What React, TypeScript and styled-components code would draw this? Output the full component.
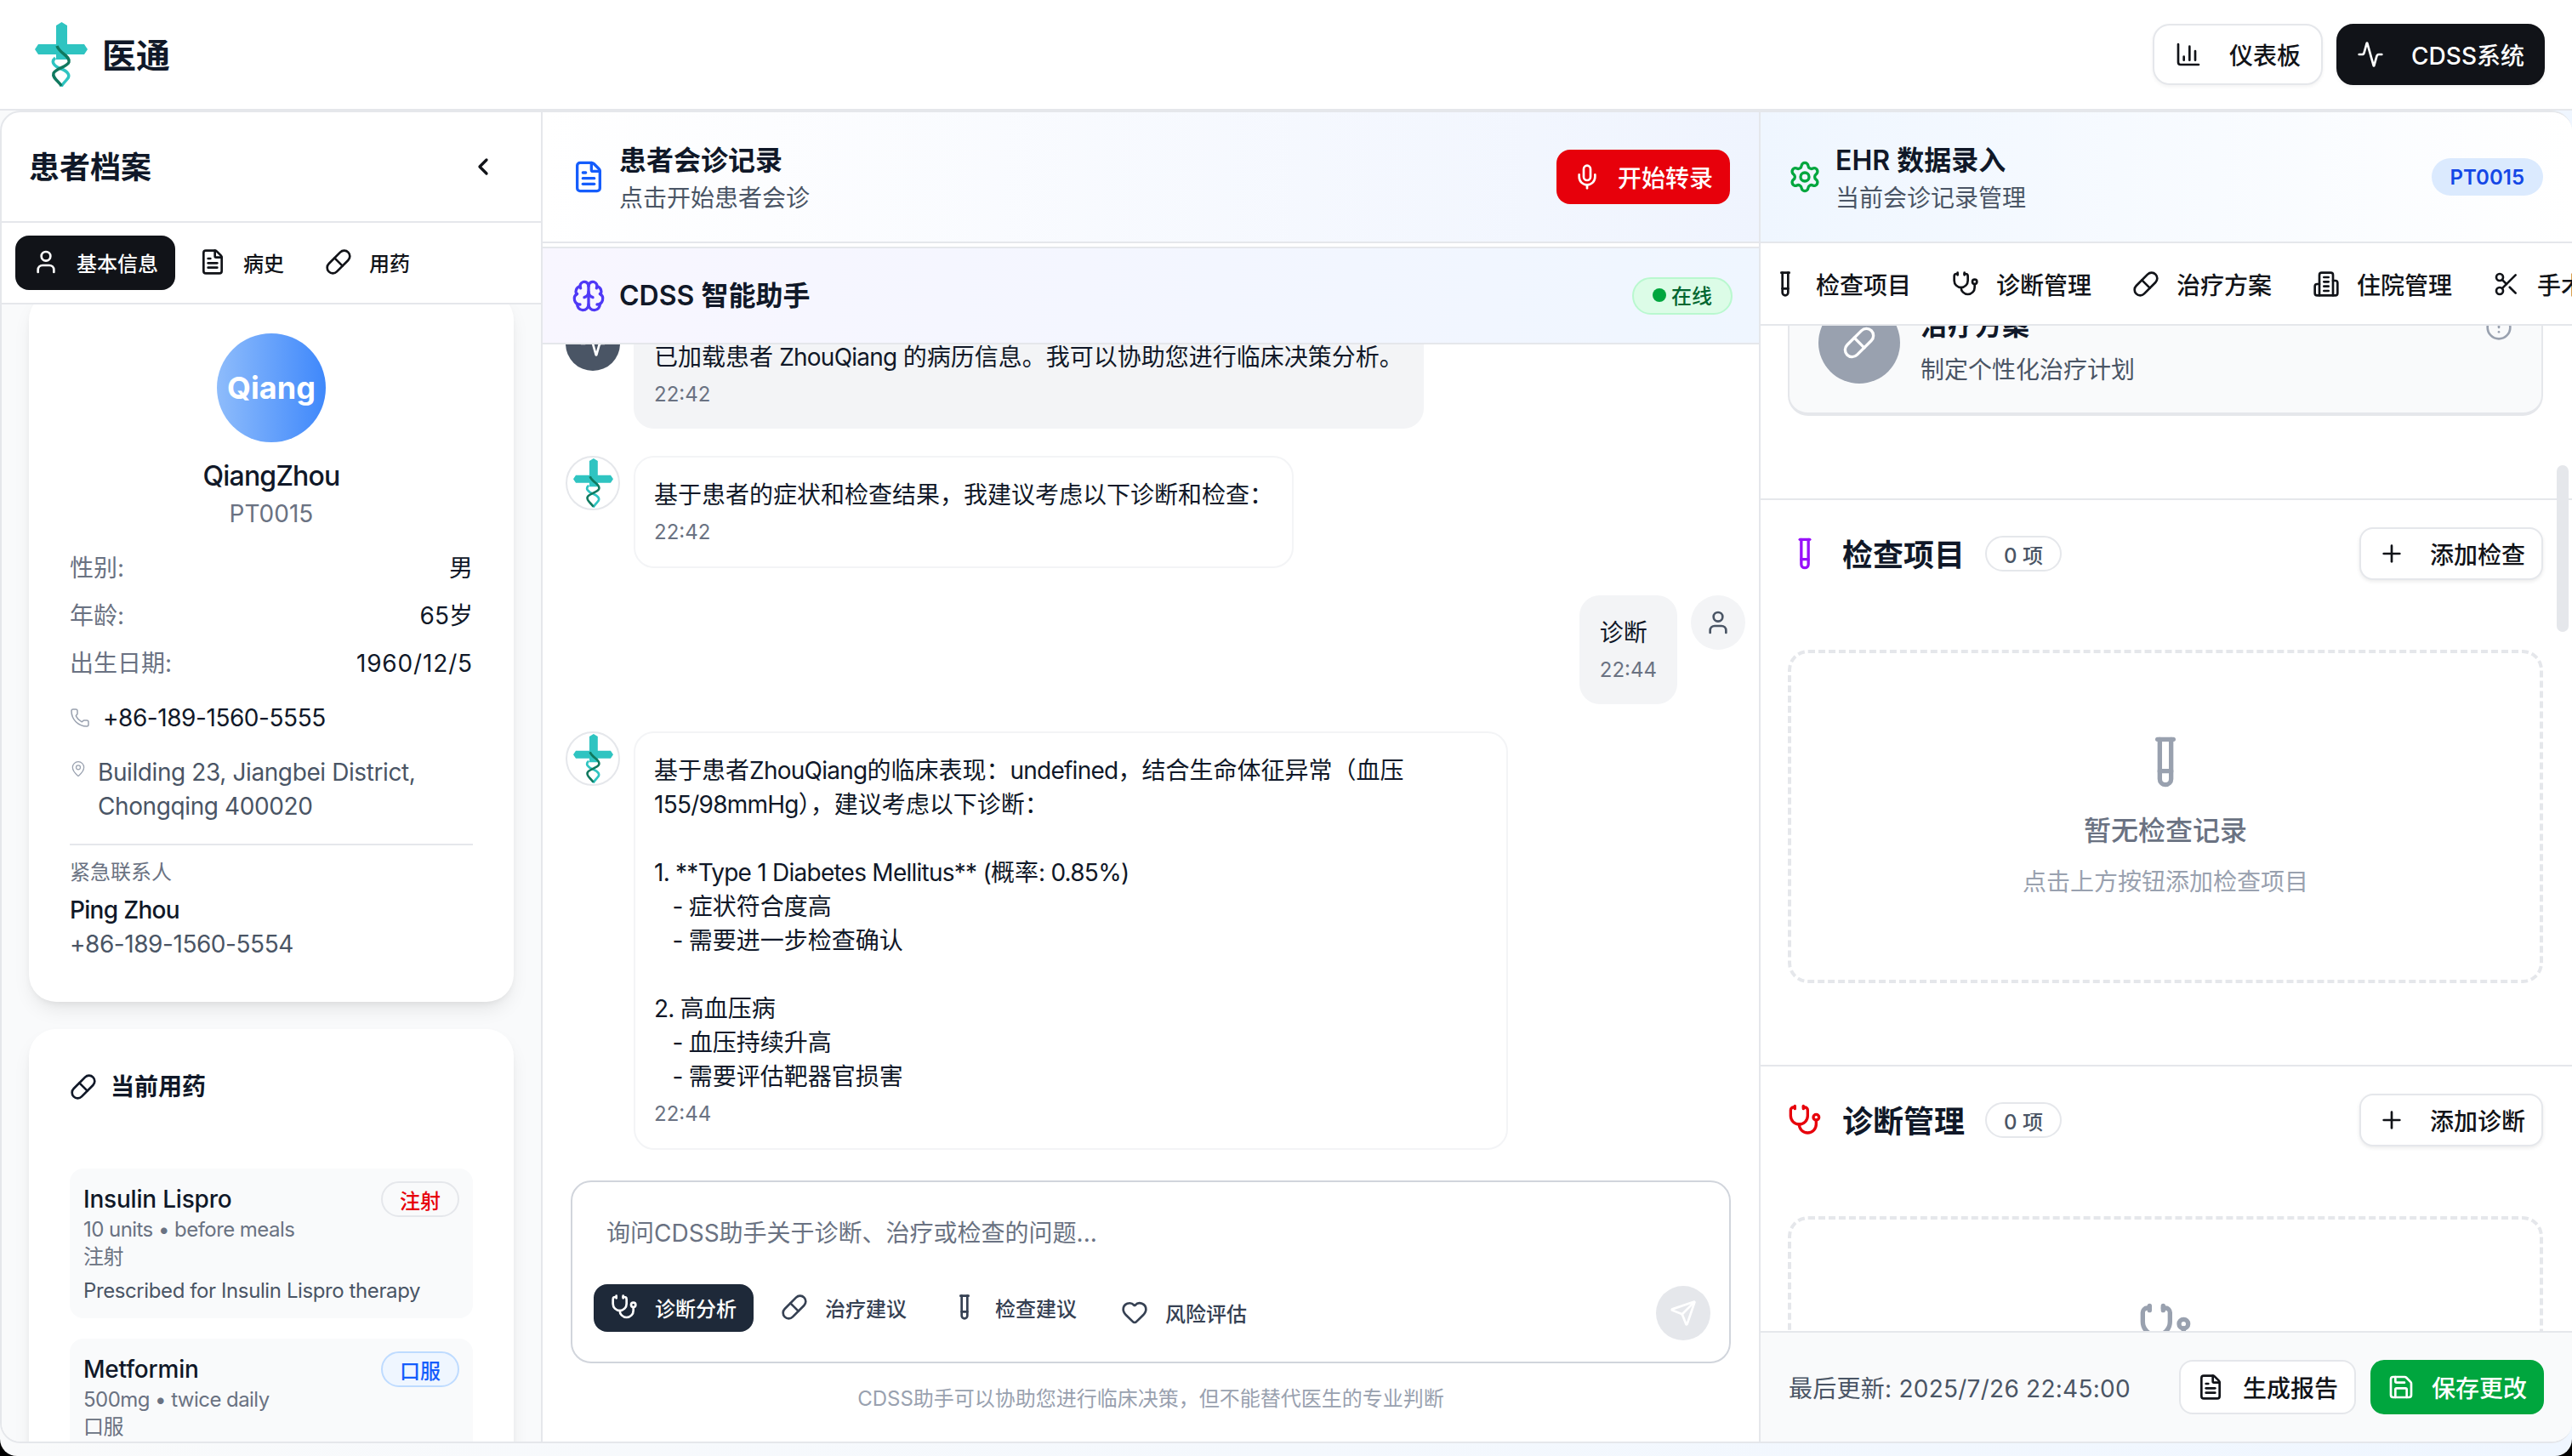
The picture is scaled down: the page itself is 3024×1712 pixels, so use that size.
import React from 'react';
import styled, { createGlobalStyle } from 'styled-components';
import {
  Activity,
  Brain,
  ChartColumn,
  ChevronLeft,
  CircleAlert,
  FileText,
  Heart,
  MapPin,
  Mic,
  Phone,
  Pill,
  Plus,
  Save,
  Scissors,
  Send,
  Settings,
  Stethoscope,
  TestTube,
  User,
} from 'lucide-react';

const GlobalStyle = createGlobalStyle`
  * {
    box-sizing: border-box;
  }
  html, body {
    margin: 0;
    width: 3024px;
    height: 1712px;
    overflow: hidden;
    background: #000;
    font-family: Inter, "Noto Sans CJK SC", sans-serif;
    color: #101828;
  }
`;

function Logo({ width }: { width: number }) {
  return (
    <svg width={width} height={(width * 76) / 62} viewBox='0 0 62 76' fill='none'>
      <path
        d='M25 4 L31.500 0 L38 4 V26 H58 L62 32 L58 38 H38 V44 H25 V38 H4 L0 32 L4 26 H25 Z'
        fill='#2fc4c1'
      />
      <path
        d='M24 42 C18 47 23 52 31 55 C39 58 42 63 38 67 C35 71 32 73 31 76'
        stroke='#2fc4c1'
        strokeWidth='3.500'
      />
      <path
        d='M26 28 C29 37 42 40 40 47 C38 53 25 54 22 60 C20 66 29 70 31 75'
        stroke='#10795f'
        strokeWidth='3.500'
      />
    </svg>
  );
}

// lucide 的新版 Building2 带门，这里要旧版
function WardIcon({ size }: { size: number }) {
  return (
    <svg
      width={size}
      height={size}
      viewBox='0 0 24 24'
      fill='none'
      stroke='currentColor'
      strokeWidth='2'
      strokeLinecap='round'
      strokeLinejoin='round'
    >
      <path d='M6 22V4a2 2 0 0 1 2-2h8a2 2 0 0 1 2 2v18Z' />
      <path d='M6 12H4a2 2 0 0 0-2 2v6a2 2 0 0 0 2 2h2' />
      <path d='M18 9h2a2 2 0 0 1 2 2v9a2 2 0 0 1-2 2h-2' />
      <path d='M10 6h4' />
      <path d='M10 10h4' />
      <path d='M10 14h4' />
      <path d='M10 18h4' />
    </svg>
  );
}

type Message = {
  from: 'system' | 'bot' | 'user';
  text: string;
  time: string;
};

const messages: Message[] = [
  { from: 'system', text: '已加载患者 ZhouQiang 的病历信息。我可以协助您进行临床决策分析。', time: '22:42' },
  { from: 'bot', text: '基于患者的症状和检查结果，我建议考虑以下诊断和检查：', time: '22:42' },
  { from: 'user', text: '诊断', time: '22:44' },
  {
    from: 'bot',
    text: `基于患者ZhouQiang的临床表现：undefined，结合生命体征异常（血压155/98mmHg），建议考虑以下诊断：

1. **Type 1 Diabetes Mellitus** (概率: 0.85%)
   - 症状符合度高
   - 需要进一步检查确认

2. 高血压病
   - 血压持续升高
   - 需要评估靶器官损害`,
    time: '22:44',
  },
];

const ehrTabs = [
  { label: '检查项目', icon: TestTube },
  { label: '诊断管理', icon: Stethoscope },
  { label: '治疗方案', icon: Pill },
  { label: '住院管理', icon: WardIcon },
  { label: '手术管理', icon: Scissors },
];

// 拉丁字母段落收紧一点，中文保持全角
function withLatinRuns(text: string) {
  return text
    .split(/([\x20-\x7e]+)/)
    .map((part, i) => (i % 2 ? <LatinRun key={i}>{part}</LatinRun> : part));
}

function App() {
  return (
    <Shell>
      <GlobalStyle />
      <TopBar>
        <Brand>
          <Logo width={62} />
          <BrandName>医通</BrandName>
        </Brand>
        <TopActions>
          <TopButton>
            <ChartColumn size={32} strokeWidth={2} />
            仪表板
          </TopButton>
          <TopButton $active>
            <Activity size={32} strokeWidth={2} />
            CDSS系统
          </TopButton>
        </TopActions>
      </TopBar>

      <Main>
        <PatientPanel>
          <PanelTitleBar>
            <PanelTitle>患者档案</PanelTitle>
            <CollapseIcon size={32} strokeWidth={2.5} />
          </PanelTitleBar>
          <PatientTabs>
            <PatientTab $active>
              <User size={32} />
              基本信息
            </PatientTab>
            <PatientTab>
              <FileText size={32} />
              病史
            </PatientTab>
            <PatientTab>
              <Pill size={32} />
              用药
            </PatientTab>
          </PatientTabs>
          <PatientScroll>
            <PatientCard>
              <AvatarLarge>Qiang</AvatarLarge>
              <PatientName>QiangZhou</PatientName>
              <PatientCode>PT0015</PatientCode>
              <InfoRows>
                <InfoRow>
                  <InfoLabel>性别:</InfoLabel>
                  <span>男</span>
                </InfoRow>
                <InfoRow>
                  <InfoLabel>年龄:</InfoLabel>
                  <span>65岁</span>
                </InfoRow>
                <InfoRow>
                  <InfoLabel>出生日期:</InfoLabel>
                  <DateValue>1960/12/5</DateValue>
                </InfoRow>
              </InfoRows>
              <PhoneRow>
                <Phone size={24} color='#99a1af' strokeWidth={1.5} />
                +86-189-1560-5555
              </PhoneRow>
              <AddressRow>
                <MapPin size={20} color='#99a1af' strokeWidth={1.5} />
                <span>Building 23, Jiangbei District, Chongqing 400020</span>
              </AddressRow>
              <Contact>
                <ContactLabel>紧急联系人</ContactLabel>
                <ContactName>Ping Zhou</ContactName>
                <ContactPhone>+86-189-1560-5554</ContactPhone>
              </Contact>
            </PatientCard>

            <MedicationCard>
              <MedicationTitle>
                <Pill size={32} />
                当前用药
              </MedicationTitle>
              <MedicationList>
                <MedicationItem>
                  <MedicationHead>
                    <MedicationName>Insulin Lispro</MedicationName>
                    <RouteBadge $tone='red'>注射</RouteBadge>
                  </MedicationHead>
                  <MedicationLine>10 units • before meals</MedicationLine>
                  <MedicationLine>注射</MedicationLine>
                  <MedicationNote>Prescribed for Insulin Lispro therapy</MedicationNote>
                </MedicationItem>
                <MedicationItem>
                  <MedicationHead>
                    <MedicationName>Metformin</MedicationName>
                    <RouteBadge $tone='blue'>口服</RouteBadge>
                  </MedicationHead>
                  <MedicationLine>500mg • twice daily</MedicationLine>
                  <MedicationLine>口服</MedicationLine>
                </MedicationItem>
              </MedicationList>
            </MedicationCard>
          </PatientScroll>
        </PatientPanel>

        <ChatPanel>
          <ConsultHeader>
            <HeaderLead>
              <FileText size={40} color='#155dfc' />
              <HeaderText>
                <HeaderTitle>患者会诊记录</HeaderTitle>
                <HeaderSub>点击开始患者会诊</HeaderSub>
              </HeaderText>
            </HeaderLead>
            <RecordButton>
              <Mic size={32} />
              开始转录
            </RecordButton>
          </ConsultHeader>
          <AssistantHeader>
            <HeaderLead>
              <Brain size={40} color='#4f39f6' />
              <HeaderTitle>CDSS 智能助手</HeaderTitle>
            </HeaderLead>
            <OnlinePill>
              <OnlineDot />
              在线
            </OnlinePill>
          </AssistantHeader>

          <MessageList>
            {messages.map((m, i) => (
              <MessageRow key={i} $mine={m.from === 'user'}>
                <MessageAvatar $from={m.from}>
                  {m.from === 'bot' && <Logo width={47} />}
                  {m.from === 'system' && <Activity size={32} color='#fff' />}
                  {m.from === 'user' && <User size={32} color='#4a5565' />}
                </MessageAvatar>
                <Bubble $from={m.from}>
                  <BubbleText>{withLatinRuns(m.text)}</BubbleText>
                  <BubbleTime>{m.time}</BubbleTime>
                </Bubble>
              </MessageRow>
            ))}
          </MessageList>

          <Composer>
            <ComposerBox>
              <Placeholder>询问CDSS助手关于诊断、治疗或检查的问题...</Placeholder>
              <ComposerTools>
                <ToolGroup>
                  <ToolButton $active>
                    <Stethoscope size={32} />
                    诊断分析
                  </ToolButton>
                  <ToolButton>
                    <Pill size={32} />
                    治疗建议
                  </ToolButton>
                  <ToolButton>
                    <TestTube size={32} />
                    检查建议
                  </ToolButton>
                  <ToolButton $lower>
                    <Heart size={32} />
                    风险评估
                  </ToolButton>
                </ToolGroup>
                <SendButton>
                  <Send size={32} color='#fff' />
                </SendButton>
              </ComposerTools>
            </ComposerBox>
            <Disclaimer>CDSS助手可以协助您进行临床决策，但不能替代医生的专业判断</Disclaimer>
          </Composer>
        </ChatPanel>

        <EhrPanel>
          <EhrHeader>
            <HeaderLead>
              <Settings size={40} color='#00a63e' />
              <HeaderText>
                <HeaderTitle>EHR 数据录入</HeaderTitle>
                <HeaderSub>当前会诊记录管理</HeaderSub>
              </HeaderText>
            </HeaderLead>
            <CodeBadge>PT0015</CodeBadge>
          </EhrHeader>
          <EhrTabs>
            {ehrTabs.map((tab) => (
              <EhrTab key={tab.label}>
                <tab.icon size={32} />
                {tab.label}
              </EhrTab>
            ))}
          </EhrTabs>
          <EhrScroll>
            <EhrContent>
              <PlanCardWrap>
                <PlanCard>
                  <PlanIcon>
                    <Pill size={40} color='#fff' />
                  </PlanIcon>
                  <PlanText>
                    <PlanTitle>治疗方案</PlanTitle>
                    <PlanSub>制定个性化治疗计划</PlanSub>
                  </PlanText>
                  <PlanAlert size={32} color='#99a1af' />
                </PlanCard>
              </PlanCardWrap>

              <Section>
                <SectionHead>
                  <SectionLead>
                    <TestTube size={40} color='#9810fa' />
                    <SectionTitle>检查项目</SectionTitle>
                    <CountBadge>0 项</CountBadge>
                  </SectionLead>
                  <AddButton>
                    <Plus size={32} />
                    添加检查
                  </AddButton>
                </SectionHead>
                <EmptyBox>
                  <TestTube size={64} color='#99a1af' />
                  <EmptyTitle>暂无检查记录</EmptyTitle>
                  <EmptySub>点击上方按钮添加检查项目</EmptySub>
                </EmptyBox>
              </Section>

              <Section>
                <SectionHead>
                  <SectionLead>
                    <Stethoscope size={40} color='#e7000b' />
                    <SectionTitle>诊断管理</SectionTitle>
                    <CountBadge>0 项</CountBadge>
                  </SectionLead>
                  <AddButton>
                    <Plus size={32} />
                    添加诊断
                  </AddButton>
                </SectionHead>
                <EmptyBox>
                  <Stethoscope size={64} color='#99a1af' />
                </EmptyBox>
              </Section>
            </EhrContent>
            <ScrollThumb />
          </EhrScroll>
          <EhrFooter>
            <UpdatedAt>最后更新: 2025/7/26 22:45:00</UpdatedAt>
            <FooterActions>
              <FooterButton>
                <FileText size={32} />
                生成报告
              </FooterButton>
              <FooterButton $primary>
                <Save size={32} />
                保存更改
              </FooterButton>
            </FooterActions>
          </EhrFooter>
        </EhrPanel>
      </Main>
    </Shell>
  );
}

const Shell = styled.div`
  width: 3024px;
  height: 1712px;
  display: flex;
  flex-direction: column;
  overflow: hidden;
  border-radius: 0 0 20px 20px;
  background: linear-gradient(90deg, #f9fafb, #eff6ff);
`;

const TopBar = styled.header`
  height: 130px;
  flex: none;
  display: flex;
  align-items: center;
  justify-content: space-between;
  padding: 0 32px 0 41px;
  background: #fff;
  border-bottom: 2px solid #e5e7eb;
`;

const Brand = styled.div`
  display: flex;
  align-items: center;
  gap: 17px;
`;

const BrandName = styled.span`
  font-size: 40px;
  font-weight: 700;
  padding-bottom: 2px;
`;

const TopActions = styled.div`
  display: flex;
  gap: 16px;
`;

const TopButton = styled.div<{ $active?: boolean }>`
  height: 72px;
  display: flex;
  align-items: center;
  gap: 32px;
  padding: 0 ${(p) => (p.$active ? '22px' : '24px')};
  border-radius: 20px;
  border: 2px solid ${(p) => (p.$active ? '#111318' : '#e5e7eb')};
  background: ${(p) => (p.$active ? '#111318' : '#fff')};
  color: ${(p) => (p.$active ? '#fff' : '#111318')};
  font-size: 28px;
  font-weight: 500;
  box-shadow: 0 2px 4px rgba(0, 0, 0, 0.05);
`;

const Main = styled.main`
  flex: 1;
  min-height: 0;
  display: flex;
  margin-bottom: 15px;
`;

const PatientPanel = styled.section`
  width: 638px;
  flex: none;
  display: flex;
  flex-direction: column;
  border: 2px solid #e5e7eb;
  border-radius: 24px 0 0 24px;
  background: #fff;
  overflow: hidden;
`;

const PanelTitleBar = styled.div`
  height: 130px;
  flex: none;
  display: flex;
  align-items: center;
  justify-content: space-between;
  padding: 0 52px 0 32px;
  border-bottom: 2px solid #e5e7eb;
`;

const PanelTitle = styled.h2`
  margin: 0 0 4px;
  font-size: 36px;
  font-weight: 700;
`;

const CollapseIcon = styled(ChevronLeft)`
  color: #111318;
`;

const PatientTabs = styled.div`
  height: 96px;
  flex: none;
  display: flex;
  align-items: center;
  gap: 8px;
  padding: 0 16px;
  border-bottom: 2px solid #e5e7eb;
`;

const PatientTab = styled.div<{ $active?: boolean }>`
  height: 64px;
  display: flex;
  align-items: center;
  gap: 20px;
  padding: 0 20px 2px;
  border-radius: 16px;
  font-size: 24px;
  font-weight: 500;
  background: ${(p) => (p.$active ? '#111318' : 'transparent')};
  color: ${(p) => (p.$active ? '#fff' : '#111318')};
`;

const PatientScroll = styled.div`
  flex: 1;
  min-height: 0;
  overflow: hidden;
  background: #f9fafb;
  padding: 0 32px;
`;

const PatientCard = styled.div`
  margin-top: -14px;
  padding: 48px;
  display: flex;
  flex-direction: column;
  background: #fff;
  border-radius: 32px;
  box-shadow: 0 12px 24px -6px rgba(0, 0, 0, 0.1), 0 4px 10px -4px rgba(0, 0, 0, 0.08);
`;

const AvatarLarge = styled.div`
  width: 128px;
  height: 128px;
  align-self: center;
  display: flex;
  align-items: center;
  justify-content: center;
  border-radius: 50%;
  background: linear-gradient(90deg, #8ebcfb, #3f88fb);
  color: #fff;
  font-size: 36px;
  font-weight: 700;
`;

const PatientName = styled.div`
  margin-top: 16px;
  text-align: center;
  font-size: 32px;
  line-height: 48px;
  font-weight: 500;
  letter-spacing: -0.8px;
`;

const PatientCode = styled.div`
  text-align: center;
  font-size: 28px;
  line-height: 40px;
  color: #6a7282;
`;

const InfoRows = styled.div`
  margin-top: 24px;
  display: flex;
  flex-direction: column;
  gap: 16px;
`;

const InfoRow = styled.div`
  display: flex;
  justify-content: space-between;
  font-size: 28px;
  line-height: 40px;
`;

const InfoLabel = styled.span`
  color: #6a7282;
`;

const DateValue = styled.span`
  letter-spacing: 0.85px;
`;

const PhoneRow = styled.div`
  margin-top: 24px;
  display: flex;
  align-items: center;
  gap: 15px;
  font-size: 28px;
  line-height: 40px;
  letter-spacing: -0.45px;
`;

const AddressRow = styled.div`
  margin-top: 24px;
  display: flex;
  align-items: flex-start;
  gap: 13px;
  font-size: 28px;
  line-height: 40px;
  letter-spacing: -0.4px;
  color: #4a5565;

  svg {
    flex: none;
    margin-top: 6px;
  }
`;

const Contact = styled.div`
  margin-top: 24px;
  padding-top: 16px;
  border-top: 2px solid #e5e7eb;
`;

const ContactLabel = styled.div`
  font-size: 24px;
  line-height: 32px;
  color: #6a7282;
  margin-bottom: 8px;
`;

const ContactName = styled.div`
  font-size: 28px;
  line-height: 40px;
  font-weight: 500;
  letter-spacing: -0.7px;
`;

const ContactPhone = styled.div`
  font-size: 28px;
  line-height: 40px;
  letter-spacing: -0.45px;
  color: #4a5565;
`;

const MedicationCard = styled.div`
  margin-top: 32px;
  padding: 48px;
  background: #fff;
  border-radius: 32px;
  box-shadow: 0 12px 24px -6px rgba(0, 0, 0, 0.1), 0 4px 10px -4px rgba(0, 0, 0, 0.08);
`;

const MedicationTitle = styled.div`
  display: flex;
  align-items: center;
  gap: 16px;
  font-size: 28px;
  line-height: 40px;
  font-weight: 600;
`;

const MedicationList = styled.div`
  margin-top: 76px;
  display: flex;
  flex-direction: column;
  gap: 24px;
`;

const MedicationItem = styled.div`
  padding: 16px;
  border-radius: 16px;
  background: #f9fafb;
`;

const MedicationHead = styled.div`
  display: flex;
  align-items: center;
  justify-content: space-between;
  height: 40px;
`;

const MedicationName = styled.div`
  font-size: 28px;
  font-weight: 500;
  letter-spacing: -0.2px;
`;

const RouteBadge = styled.div<{ $tone: 'red' | 'blue' }>`
  height: 42px;
  display: flex;
  align-items: center;
  padding: 0 20px;
  border-radius: 21px;
  font-size: 24px;
  font-weight: 500;
  color: ${(p) => (p.$tone === 'red' ? '#e7000b' : '#155dfc')};
  border: 2px solid ${(p) => (p.$tone === 'red' ? '#e5e7eb' : '#bedbff')};
  background: ${(p) => (p.$tone === 'red' ? 'transparent' : '#eff6ff')};
`;

const MedicationLine = styled.div`
  font-size: 24px;
  line-height: 32px;
  letter-spacing: -0.55px;
  color: #6a7282;
`;

const MedicationNote = styled.div`
  margin-top: 8px;
  font-size: 24px;
  line-height: 32px;
  letter-spacing: -0.4px;
  color: #4a5565;
`;

const ChatPanel = styled.section`
  width: 1430px;
  flex: none;
  display: flex;
  flex-direction: column;
  background: #fff;
  border-top: 2px solid #e5e7eb;
  border-bottom: 2px solid #e5e7eb;
`;

const ConsultHeader = styled.div`
  height: 154px;
  flex: none;
  display: flex;
  align-items: center;
  justify-content: space-between;
  padding: 0 34px;
  background: linear-gradient(90deg, #fff, #eff4fe);
  border-bottom: 2px solid #e5e7eb;
`;

const AssistantHeader = styled.div`
  height: 115px;
  flex: none;
  margin-top: 4px;
  display: flex;
  align-items: center;
  justify-content: space-between;
  padding: 0 31px 0 34px;
  background: linear-gradient(90deg, #f8f6ff, #eff6ff);
  border-top: 2px solid #e5e7eb;
  border-bottom: 2px solid #e5e7eb;
`;

const HeaderLead = styled.div`
  display: flex;
  align-items: center;
  gap: 16px;
`;

const HeaderText = styled.div`
  padding-top: 3px;
`;

const HeaderTitle = styled.div`
  font-size: 32px;
  line-height: 44px;
  font-weight: 600;
`;

const HeaderSub = styled.div`
  font-size: 28px;
  line-height: 40px;
  margin-top: 2px;
  color: #4a5565;
`;

const RecordButton = styled.div`
  height: 64px;
  display: flex;
  align-items: center;
  gap: 20px;
  padding: 0 20px;
  border-radius: 16px;
  background: #e7000b;
  color: #fff;
  font-size: 28px;
  font-weight: 500;
`;

const OnlinePill = styled.div`
  height: 44px;
  display: flex;
  align-items: center;
  gap: 6px;
  padding: 0 22px 2px;
  border-radius: 22px;
  background: #dcfce7;
  border: 2px solid #b9f8cf;
  color: #016630;
  font-size: 24px;
  font-weight: 500;
`;

const OnlineDot = styled.span`
  width: 16px;
  height: 16px;
  border-radius: 50%;
  background: #00a63e;
`;

const MessageList = styled.div`
  flex: 1;
  min-height: 0;
  overflow: hidden;
  display: flex;
  flex-direction: column;
  justify-content: flex-end;
  gap: 32px;
  padding: 0 16px 36px 27px;
`;

const MessageRow = styled.div<{ $mine?: boolean }>`
  flex: none;
  display: flex;
  align-items: flex-start;
  gap: 16px;
  flex-direction: ${(p) => (p.$mine ? 'row-reverse' : 'row')};
`;

const MessageAvatar = styled.div<{ $from: Message['from'] }>`
  width: 64px;
  height: 64px;
  flex: none;
  display: flex;
  align-items: center;
  justify-content: center;
  border-radius: 50%;
  background: ${(p) =>
    p.$from === 'system' ? '#4a5565' : p.$from === 'user' ? '#f3f4f6' : '#fff'};
  border: 2px solid ${(p) => (p.$from === 'bot' ? '#e5e7eb' : 'transparent')};
`;

const bubblePadding = { system: '26px 22px 22px', bot: '24px 22px', user: '22px' };

const Bubble = styled.div<{ $from: Message['from'] }>`
  max-width: 1028px;
  padding: ${(p) => bubblePadding[p.$from]};
  border-radius: 24px;
  background: ${(p) => (p.$from === 'bot' ? '#fff' : '#f3f4f6')};
  border: 2px solid ${(p) => (p.$from === 'bot' ? '#f3f4f6' : 'transparent')};
`;

const BubbleText = styled.div`
  font-size: 28px;
  line-height: 40px;
  white-space: pre-wrap;
`;

const LatinRun = styled.span`
  letter-spacing: -0.75px;
`;

const BubbleTime = styled.div`
  margin-top: 8px;
  font-size: 24px;
  line-height: 32px;
  color: #6a7282;
`;

const Composer = styled.div`
  flex: none;
  padding: 0 33px;
  height: 307px;
`;

const ComposerBox = styled.div`
  height: 215px;
  padding: 20px 22px 0 25px;
  border: 2px solid #d1d5dc;
  border-radius: 24px;
  display: flex;
  flex-direction: column;
`;

const Placeholder = styled.div`
  height: 80px;
  padding-left: 15px;
  font-size: 28px;
  line-height: 80px;
  color: #6a7282;
`;

const ComposerTools = styled.div`
  margin-top: 20px;
  display: flex;
  justify-content: space-between;
  align-items: flex-start;
`;

const ToolGroup = styled.div`
  display: flex;
  align-items: flex-start;
  gap: 12px;
`;

const ToolButton = styled.div<{ $active?: boolean; $lower?: boolean }>`
  height: 56px;
  display: flex;
  align-items: center;
  gap: 20px;
  padding: 0 20px 2px;
  margin-top: ${(p) => (p.$lower ? '6px' : '0')};
  border-radius: 16px;
  font-size: 24px;
  font-weight: 500;
  background: ${(p) => (p.$active ? '#1e2939' : 'transparent')};
  color: ${(p) => (p.$active ? '#fff' : '#364153')};
`;

const SendButton = styled.div`
  width: 64px;
  height: 64px;
  margin-top: 2px;
  display: flex;
  align-items: center;
  justify-content: center;
  border-radius: 50%;
  background: #e5e7eb;
`;

const Disclaimer = styled.div`
  margin-top: 26px;
  text-align: center;
  font-size: 24px;
  line-height: 32px;
  color: #99a1af;
`;

const EhrPanel = styled.section`
  flex: 1;
  min-width: 0;
  display: flex;
  flex-direction: column;
  background: #fff;
  border: 2px solid #e5e7eb;
  border-right: none;
  border-radius: 0 24px 24px 0;
  overflow: hidden;
`;

const EhrHeader = styled.div`
  height: 154px;
  flex: none;
  display: flex;
  align-items: center;
  justify-content: space-between;
  padding: 0 34px 0 32px;
  background: linear-gradient(90deg, #eff6ff, #fff);
  border-bottom: 2px solid #e5e7eb;
`;

const CodeBadge = styled.div`
  height: 44px;
  display: flex;
  align-items: center;
  padding: 0 22px;
  border-radius: 22px;
  background: #dbeafe;
  color: #1447e6;
  font-size: 24px;
  font-weight: 600;
`;

const EhrTabs = styled.div`
  height: 97px;
  flex: none;
  display: flex;
  align-items: center;
  gap: 48px;
  padding-left: 13px;
  overflow: hidden;
  border-bottom: 2px solid #e5e7eb;
`;

const EhrTab = styled.div`
  flex: none;
  display: flex;
  align-items: center;
  gap: 20px;
  font-size: 28px;
  font-weight: 500;
  color: #111318;
`;

const EhrScroll = styled.div`
  flex: 1;
  min-height: 0;
  overflow: hidden;
  position: relative;
`;

const EhrContent = styled.div`
  margin-top: -62px;
`;

const ScrollThumb = styled.div`
  position: absolute;
  top: 164px;
  right: 4px;
  width: 14px;
  height: 196px;
  border-radius: 7px;
  background: #e5e7eb;
`;

const PlanCardWrap = styled.div`
  padding: 0 34px 97px 32px;
`;

const PlanCard = styled.div`
  height: 168px;
  display: flex;
  align-items: flex-start;
  gap: 24px;
  padding: 32px 34px 32px 34px;
  background: #f9fafb;
  border: 2px solid #e5e7eb;
  border-bottom-width: 4px;
  border-radius: 24px;
`;

const PlanIcon = styled.div`
  width: 96px;
  height: 96px;
  flex: none;
  display: flex;
  align-items: center;
  justify-content: center;
  border-radius: 50%;
  background: #99a1af;
`;

const PlanText = styled.div`
  flex: 1;
  padding-top: 6px;
`;

const PlanTitle = styled.div`
  font-size: 32px;
  line-height: 44px;
  font-weight: 600;
`;

const PlanSub = styled.div`
  margin-top: 10px;
  font-size: 28px;
  line-height: 40px;
  color: #4a5565;
`;

const PlanAlert = styled(CircleAlert)`
  margin-top: 14px;
`;

const Section = styled.div`
  padding: 32px 34px 96px 32px;
  border-top: 2px solid #e5e7eb;
`;

const SectionHead = styled.div`
  height: 62px;
  display: flex;
  align-items: center;
  justify-content: space-between;
`;

const SectionLead = styled.div`
  display: flex;
  align-items: center;
  gap: 24px;
`;

const SectionTitle = styled.h3`
  margin: 0 0 3px;
  font-size: 36px;
  font-weight: 700;
`;

const CountBadge = styled.div`
  height: 42px;
  display: flex;
  align-items: center;
  padding: 0 20px;
  border: 2px solid #e5e7eb;
  border-radius: 21px;
  font-size: 24px;
  font-weight: 500;
  color: #4a5565;
`;

const AddButton = styled.div`
  height: 62px;
  display: flex;
  align-items: center;
  gap: 29px;
  padding: 0 19px 0 20px;
  background: #fff;
  border: 2px solid #e5e7eb;
  border-radius: 16px;
  font-size: 28px;
  font-weight: 500;
  color: #111318;
  box-shadow: 0 2px 4px rgba(0, 0, 0, 0.08);
`;

const EmptyBox = styled.div`
  margin-top: 82px;
  height: 392px;
  padding-top: 96px;
  display: flex;
  flex-direction: column;
  align-items: center;
  border: 4px dashed #e5e7eb;
  border-radius: 24px;
`;

const EmptyTitle = styled.div`
  margin-top: 25px;
  font-size: 32px;
  line-height: 48px;
  font-weight: 500;
  color: #6a7282;
`;

const EmptySub = styled.div`
  margin-top: 16px;
  font-size: 28px;
  line-height: 40px;
  color: #99a1af;
`;

const EhrFooter = styled.div`
  height: 130px;
  flex: none;
  display: flex;
  align-items: center;
  justify-content: space-between;
  padding: 0 33px;
  background: #f9fafb;
  border-top: 2px solid #e5e7eb;
`;

const UpdatedAt = styled.div`
  font-size: 28px;
  letter-spacing: 0.25px;
  color: #4a5565;
`;

const FooterActions = styled.div`
  display: flex;
  gap: 17px;
`;

const FooterButton = styled.div<{ $primary?: boolean }>`
  height: 64px;
  display: flex;
  align-items: center;
  gap: ${(p) => (p.$primary ? '20px' : '22px')};
  padding: 0 ${(p) => (p.$primary ? '18px' : '19px')};
  border-radius: 16px;
  font-size: 28px;
  font-weight: 500;
  border: 2px solid ${(p) => (p.$primary ? '#00a63e' : '#e5e7eb')};
  background: ${(p) => (p.$primary ? '#00a63e' : '#fff')};
  color: ${(p) => (p.$primary ? '#fff' : '#111318')};
`;

export default App;
